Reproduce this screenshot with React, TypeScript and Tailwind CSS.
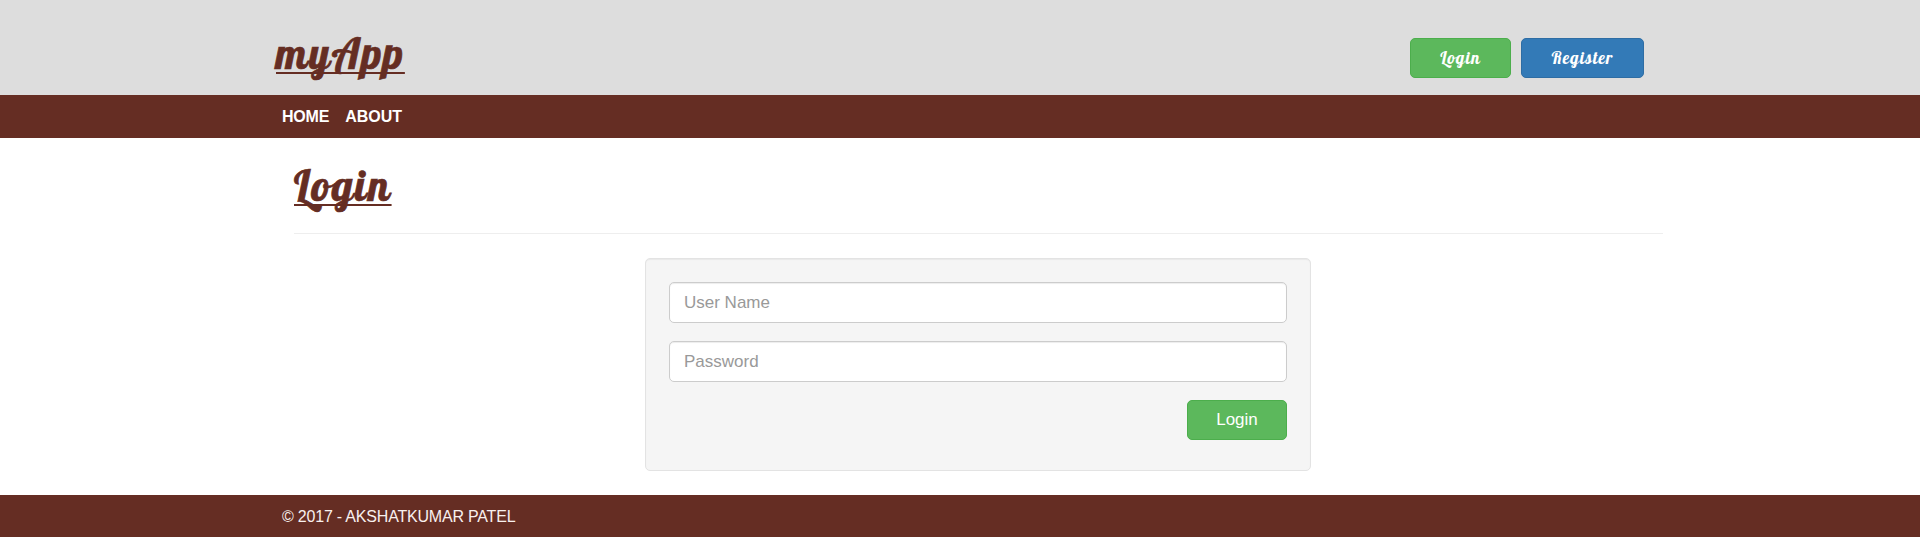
import React from "react";

const script = "font-['Lobster','Liberation_Serif',serif] font-normal";

function Title({ children, className }: { children: React.ReactNode; className: string }) {
  return (
    <h1
      className={`${script} w-fit whitespace-nowrap text-[42px] tracking-[1.9px] text-[#652d23] underline decoration-2 underline-offset-[3px] [-webkit-text-stroke:0.7px_#652d23] [text-decoration-skip-ink:none] ${className}`}
    >
      {children}
    </h1>
  );
}

function Field({ type, placeholder }: { type: string; placeholder: string }) {
  return (
    <input
      type={type}
      placeholder={placeholder}
      className="block h-[41px] w-full rounded-[5px] border border-[#ccc] bg-white px-[14px] text-[17px] shadow-[inset_0_1px_1px_rgba(0,0,0,0.075)] outline-none placeholder:text-[#999]"
    />
  );
}

export default function App() {
  return (
    <div className="min-h-[556px] bg-white font-['Liberation_Sans',Arial,sans-serif] text-[16px]">
      <header className="flex h-[95px] justify-between bg-[#ddd] pt-[38px] pr-[276px] pl-[276px]">
        <Title className="-mt-[7px] h-[46px] leading-[46px]">
          myApp
        </Title>
        <div className="flex gap-[10px]">
          <button className={`${script} h-[40px] w-[101px] rounded-[5px] border border-[#4cae4c] bg-[#5cb85c] pb-px text-[17px] leading-none tracking-[1px] text-white`}>
            Login
          </button>
          <button className={`${script} h-[40px] w-[123px] rounded-[5px] border border-[#2e6da4] bg-[#337ab7] pb-px text-[17px] leading-none tracking-[1px] text-white`}>
            Register
          </button>
        </div>
      </header>

      <nav className="flex h-[43px] items-center gap-[16px] bg-[#652d23] pl-[282px] font-bold text-white">
        <a className="tracking-[-0.2px]">HOME</a>
        <a>ABOUT</a>
      </nav>

      <main className="h-[357px] pt-[24px] pr-[257px] pl-[294px]">
        <Title className="h-[71px] leading-[48px]">
          Login
        </Title>
        <hr className="border-[#eee]" />
        <form
          className="mt-[24px] ml-[351px] flex h-[213px] w-[666px] flex-col gap-[18px] rounded-[5px] border border-[#e3e3e3] bg-[#f5f5f5] p-[23px] shadow-[inset_0_1px_1px_rgba(0,0,0,0.05)]"
          onSubmit={(e) => e.preventDefault()}
        >
          <Field type="text" placeholder="User Name" />
          <Field type="password" placeholder="Password" />
          <button className="h-[40px] w-[100px] self-end rounded-[5px] border border-[#4cae4c] bg-[#5cb85c] text-[17px] text-white">
            Login
          </button>
        </form>
      </main>

      <footer className="flex h-[42px] items-center bg-[#652d23] pt-[2px] pl-[282px] tracking-[-0.2px] text-[#f8f0ee]">
        © 2017 - AKSHATKUMAR PATEL
      </footer>
    </div>
  );
}
